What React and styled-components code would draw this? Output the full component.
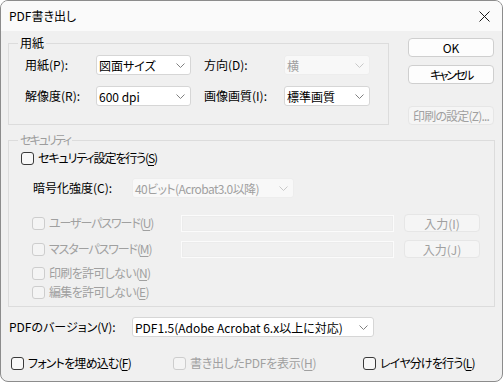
import React from 'react';
import styled, { createGlobalStyle } from 'styled-components';

const GlobalStyle = createGlobalStyle`
  html, body { margin: 0; padding: 0; background: #fff; }
  body {
    font-family: "Noto Sans CJK JP", "Noto Sans", sans-serif;
    font-size: 12px;
    color: #000;
    font-feature-settings: "palt";
  }
  * { box-sizing: border-box; }
`;

const Window = styled.div`
  width: 503px;
  height: 382px;
  border: 1px solid #8c8c8c;
  border-radius: 8px;
  overflow: hidden;
  background: #f0f0f0;
  display: flex;
  flex-direction: column;
`;

const TitleBar = styled.div`
  height: 30px;
  flex: none;
  background: #fafafa;
  display: flex;
  align-items: center;
  justify-content: space-between;
  padding: 0 12px 0 8px;
  line-height: 16px;
`;

const Body = styled.div`
  padding: 4px 0 0 7px;
  display: flex;
  flex-direction: column;
`;

const TopRow = styled.div`
  display: flex;
  align-items: flex-start;
`;

const Group = styled.fieldset`
  margin: ${p => p.$mt || 0}px 0 0;
  padding: ${p => p.$pad};
  border: 1px solid #dcdcdc;
  width: ${p => p.$w}px;
  min-width: 0;
`;

const Legend = styled.legend`
  padding: 0 2px;
  margin-left: ${p => p.$ml}px;
  line-height: 16px;
  letter-spacing: ${p => p.$ls || 0}px;
  color: ${p => (p.$disabled ? '#9d9d9d' : '#000')};
`;

const FormGrid = styled.div`
  display: grid;
  grid-template-columns: 71px 95px 93px 86px;
  grid-auto-rows: 20px;
  row-gap: 11px;
  align-items: center;
`;

const Label = styled.span`
  line-height: 16px;
  white-space: nowrap;
  padding-left: ${p => p.$indent || 0}px;
  width: ${p => (p.$w ? p.$w + 'px' : 'auto')};
  flex: none;
  color: ${p => (p.$disabled ? '#a0a0a0' : '#000')};
`;

const SelectBox = styled.div`
  width: ${p => p.$w}px;
  height: 20px;
  display: flex;
  align-items: center;
  justify-content: space-between;
  padding: 0 5px 0 2px;
  background: ${p => (p.$disabled ? '#f8f8f8' : '#fff')};
  border: 1px solid ${p => (p.$disabled ? '#ededed' : '#d6d6d6')};
  border-radius: 3px;
  color: ${p => (p.$disabled ? '#a0a0a0' : '#000')};
  letter-spacing: ${p => p.$ls || 0}px;
  white-space: nowrap;
`;

const ButtonColumn = styled.div`
  display: flex;
  flex-direction: column;
  margin: 3px 0 0 19px;
  width: 86px;
`;

const Button = styled.div`
  height: ${p => p.$h || 19}px;
  width: ${p => p.$w || 86}px;
  margin-top: ${p => p.$mt || 0}px;
  margin-left: ${p => p.$ml || 0}px;
  display: flex;
  align-items: center;
  justify-content: center;
  background: ${p => (p.$disabled ? '#f5f5f5' : '#fdfdfd')};
  border: 1px solid ${p => (p.$disabled ? '#e6e6e6' : '#cfcfcf')};
  border-radius: 4px;
  color: ${p => (p.$disabled ? '#a0a0a0' : '#000')};
  letter-spacing: ${p => p.$ls || 0}px;
  white-space: nowrap;
  flex: none;
`;

const Stack = styled.div`
  display: flex;
  flex-direction: column;
`;

const Row = styled.div`
  display: flex;
  align-items: center;
  height: ${p => p.$h || 16}px;
  margin-top: ${p => p.$mt || 0}px;
  padding-left: ${p => p.$indent || 0}px;
`;

const CheckItem = styled.label`
  display: flex;
  align-items: center;
  gap: 4px;
  width: ${p => (p.$w ? p.$w + 'px' : 'auto')};
  flex: none;
  line-height: 16px;
  white-space: nowrap;
  letter-spacing: ${p => p.$ls || 0}px;
  color: ${p => (p.$disabled ? '#a0a0a0' : '#000')};
`;

const Box = styled.span`
  width: 13px;
  height: 13px;
  flex: none;
  border: 1px solid ${p => (p.$disabled ? '#cdcdcd' : '#3a3a3a')};
  border-radius: 3px;
  background: ${p => (p.$disabled ? '#f4f4f4' : '#f8f8f8')};
`;

const TextField = styled.div`
  width: ${p => p.$w}px;
  height: 17px;
  flex: none;
  border: 1px solid #fbfbfb;
  background: #f0f0f0;
  box-shadow: inset 0 0 0 1px #ececec;
`;

const Mn = styled.u`
  text-decoration: underline;
  text-underline-offset: 2px;
`;

const Chevron = ({ disabled }) => (
  <svg width="9" height="5" viewBox="0 0 9 5">
    <polyline points="0.5,0.5 4.5,4.5 8.5,0.5" fill="none" stroke={disabled ? '#c8c8c8' : '#808080'} strokeWidth="1" />
  </svg>
);

const Select = ({ w, disabled, ls, children }) => (
  <SelectBox $w={w} $disabled={disabled} $ls={ls}>
    <span>{children}</span>
    <Chevron disabled={disabled} />
  </SelectBox>
);

const Check = ({ w, disabled, ls, children }) => (
  <CheckItem $w={w} $disabled={disabled} $ls={ls}>
    <Box $disabled={disabled} />
    <span>{children}</span>
  </CheckItem>
);

const CloseIcon = () => (
  <svg width="11" height="11" viewBox="0 0 11 11">
    <path d="M0.5 0.5 L10.5 10.5 M10.5 0.5 L0.5 10.5" stroke="#1a1a1a" strokeWidth="1" fill="none" />
  </svg>
);

export default function App() {
  return (
    <>
      <GlobalStyle />
      <Window>
        <TitleBar>
          <span>PDF書き出し</span>
          <CloseIcon />
        </TitleBar>
        <Body>
          <TopRow>
            <Group $w={381} $pad="4px 19px 18px 16px">
              <Legend $ml={-7}>用紙</Legend>
              <FormGrid>
                <Label>用紙(P):</Label>
                <Select w={95}>図面サイズ</Select>
                <Label $indent={13}>方向(D):</Label>
                <Select w={86} disabled>横</Select>
                <Label>解像度(R):</Label>
                <Select w={95}>600 dpi</Select>
                <Label $indent={13}>画像画質(I):</Label>
                <Select w={86}>標準画質</Select>
              </FormGrid>
            </Group>
            <ButtonColumn>
              <Button>OK</Button>
              <Button $mt={8} $ls={-2.5}>キャンセル</Button>
              <Button $mt={22} $ls={-0.8} $disabled>印刷の設定(Z)...</Button>
            </ButtonColumn>
          </TopRow>

          <Group $w={487} $mt={7} $pad="2px 12px 6px 12px">
            <Legend $ml={-3} $ls={-2} $disabled>セキュリティ</Legend>
            <Stack>
              <Row>
                <Check ls={-1.1}>セキュリティ設定を行う(<Mn>S</Mn>)</Check>
              </Row>
              <Row $h={20} $mt={12} $indent={12}>
                <Label $w={99}>暗号化強度(C):</Label>
                <Select w={162} ls={-0.6} disabled>40ビット(Acrobat3.0以降)</Select>
              </Row>
              <Row $h={18} $mt={16} $indent={11}>
                <Check w={149} ls={-1.1} disabled>ユーザーパスワード(<Mn>U</Mn>)</Check>
                <TextField $w={213} />
                <Button $w={76} $h={18} $ml={10} $disabled>入力(I)</Button>
              </Row>
              <Row $h={18} $mt={8} $indent={11}>
                <Check w={149} ls={-1.1} disabled>マスターパスワード(<Mn>M</Mn>)</Check>
                <TextField $w={213} />
                <Button $w={76} $h={18} $ml={10} $disabled>入力(J)</Button>
              </Row>
              <Row $mt={7} $indent={11}>
                <Check ls={-0.7} disabled>印刷を許可しない(<Mn>N</Mn>)</Check>
              </Row>
              <Row $mt={3} $indent={11}>
                <Check ls={-0.7} disabled>編集を許可しない(<Mn>E</Mn>)</Check>
              </Row>
            </Stack>
          </Group>

          <Row $h={20} $mt={10} $indent={1}>
            <Label $w={123}>PDFのバージョン(V):</Label>
            <Select w={242}>PDF1.5(Adobe Acrobat 6.x以上に対応)</Select>
          </Row>

          <Row $mt={18} $indent={3}>
            <Check w={162} ls={-0.8}>フォントを埋め込む(<Mn>F</Mn>)</Check>
            <Check w={190} ls={-0.3} disabled>書き出したPDFを表示(<Mn>H</Mn>)</Check>
            <Check ls={-0.8}>レイヤ分けを行う(<Mn>L</Mn>)</Check>
          </Row>
        </Body>
      </Window>
    </>
  );
}
